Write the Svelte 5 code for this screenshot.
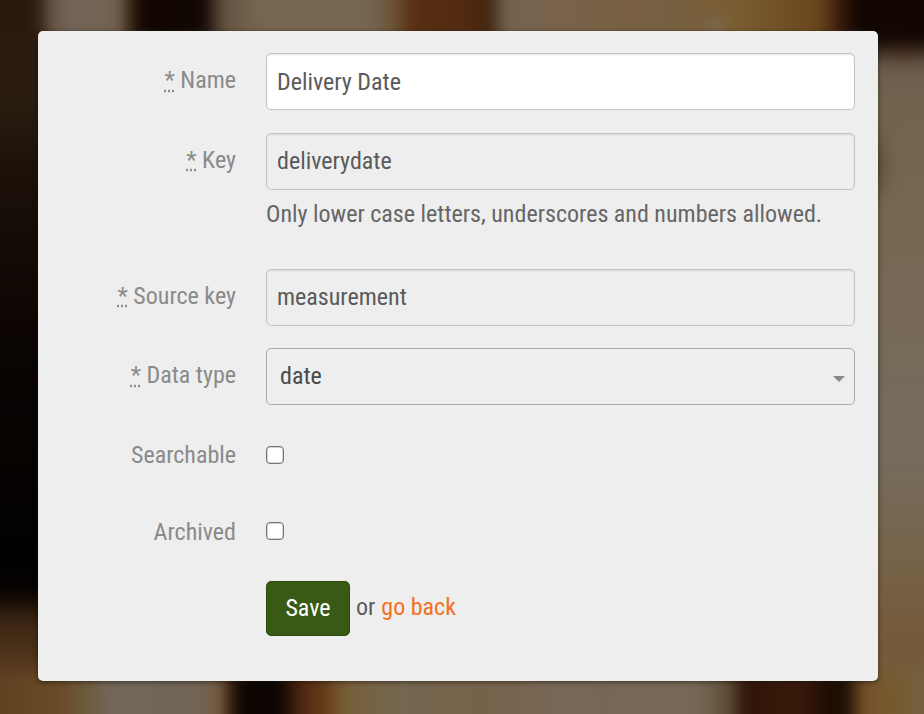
<script>
	// form rows, in page order
	const textFields = [
		{ label: "Name", value: "Delivery Date", editable: true },
		{ label: "Key", value: "deliverydate", hint: "Only lower case letters, underscores and numbers allowed." },
		{ label: "Source key", value: "measurement" },
	];
	const checks = ["Searchable", "Archived"];
</script>

<div class="page">
	<form class="card">
		{#each textFields as field}
			<div class="row" class:has-hint={field.hint}>
				<label class="label"><abbr>*</abbr> {field.label}</label>
				<div class="control">
					<input class="input" class:editable={field.editable} value={field.value} />
					{#if field.hint}<p class="hint">{field.hint}</p>{/if}
				</div>
			</div>
		{/each}

		<div class="row">
			<label class="label"><abbr>*</abbr> Data type</label>
			<div class="control">
				<div class="select">date<span class="caret"></span></div>
			</div>
		</div>

		{#each checks as check}
			<div class="row check-row">
				<label class="label">{check}</label>
				<div class="control"><span class="checkbox"></span></div>
			</div>
		{/each}

		<div class="row actions">
			<div class="label"></div>
			<div class="control">
				<button type="button" class="save">Save</button>
				<span class="or">or</span>
				<a href="#back" class="back">go back</a>
			</div>
		</div>
	</form>
</div>

<style>
	:global(body) {
		margin: 0;
		background: #000;
	}

	.page {
		position: relative;
		z-index: 0;
		width: 924px;
		height: 714px;
		overflow: hidden;
		display: flow-root;
		font-family: Roboto, "Liberation Sans", sans-serif;
		font-stretch: 75%;
		font-size: 24px;
		background: #7b6a50;
	}

	/* the blurred photo behind the card: only the strips round it show */
	.page::before {
		content: "";
		position: absolute;
		z-index: -1;
		inset: -20px;
		filter: blur(7px);
		background-repeat: no-repeat;
		background-image:
			radial-gradient(ellipse 16px 14px at 735px 48px, rgba(125, 120, 110, 0.7), transparent),
			radial-gradient(ellipse 10px 45px at 898px 185px, rgba(50, 22, 10, 0.5), transparent),
			radial-gradient(ellipse 18px 12px at 922px 75px, rgba(90, 45, 25, 0.6), transparent),
			linear-gradient(90deg, #2a1a0e 0, #2a1a0e 58px, #665444 70px, #74655a 90px, #70614e 140px, #2a1609 153px, #100602 165px, #120703 225px, #635240 242px, #766652 280px, #756651 390px, #6a4f32 418px, #582e12 430px, #512a10 490px, #3f2210 510px, #746350 525px, #78624a 580px, #796042 660px, #776042 690px, #7a5c30 760px, #6a461e 840px, #3a1a08 860px, #140703 875px, #100602 964px),
			linear-gradient(90deg, #5d3d1e 0, #6a4a27 80px, #6e5c40 110px, #71665a 130px, #716558 210px, #745a3f 242px, #2a1405 252px, #0b0401 265px, #0c0501 300px, #4e2710 320px, #663c18 345px, #776038 365px, #756650 420px, #76624a 500px, #776756 580px, #756854 720px, #5c4834 752px, #2f1508 762px, #3a1a0a 820px, #180a04 855px, #2a1408 870px, #74512a 882px, #765c30 920px, #74664e 964px),
			linear-gradient(180deg, #2a1c10 0, #2a1c10 120px, #1a1008 200px, #0a0402 370px, #020100 580px, #050201 610px, #3a2412 640px, #5e3f22 703px, #5d3d1e 754px),
			linear-gradient(180deg, #140803 0, #140803 60px, #6a5c4c 86px, #70634e 120px, #766650 220px, #756c5e 470px, #766650 540px, #745a38 670px, #74654e 754px);
		background-size:
			100% 100%,
			100% 100%,
			100% 100%,
			100% 60px,
			100% 62px,
			70px 100%,
			76px 100%;
		background-position:
			0 0,
			0 0,
			0 0,
			0 0,
			0 100%,
			0 0,
			100% 0;
	}

	.card {
		box-sizing: border-box;
		width: 840px;
		height: 650px;
		margin: 31px 0 0 38px;
		padding: 22px 23px 0 0;
		background: #eee;
		border-radius: 5px;
		box-shadow: 0 1px 5px rgba(0, 0, 0, 0.5);
	}

	.row {
		display: flex;
		margin-bottom: 22.7px;
	}
	.has-hint {
		margin-bottom: 36.9px;
	}
	.check-row {
		height: 54px;
	}

	.label {
		width: 198px;
		flex: none;
		margin-right: 30px;
		text-align: right;
		color: #8a8a8a;
		line-height: 55.7px;
	}
	.label abbr {
		text-decoration: underline dotted;
	}

	.control {
		flex: 1;
	}

	.input,
	.select {
		box-sizing: border-box;
		display: block;
		width: 100%;
		height: 57px;
		padding: 0 10px;
		border: 1px solid #c4c4c4;
		border-radius: 5px;
		background: #eee;
		color: #5a5a5a;
		font: inherit;
		font-stretch: 75%;
		box-shadow: inset 0 1px 2px rgba(0, 0, 0, 0.1);
	}
	.editable {
		background: #fff;
	}
	.select {
		position: relative;
		padding-left: 13px;
		line-height: 54px;
		border-color: #aaa;
		box-shadow: none;
		color: #4a4a4a;
	}
	.caret {
		position: absolute;
		right: 9px;
		top: 27px;
		border: 6px solid transparent;
		border-top-color: #888;
		border-bottom: 0;
	}

	.hint {
		margin: 7px 0 0;
		color: #666;
		line-height: 35px;
	}

	.checkbox {
		display: block;
		box-sizing: border-box;
		width: 18px;
		height: 18px;
		margin-top: 17.6px;
		background: #fff;
		border: 1px solid #767676;
		border-radius: 4px;
		box-shadow: inset 0 0 0 0.5px rgba(118, 118, 118, 0.6);
	}

	.actions .control {
		display: flex;
		align-items: center;
		height: 55px;
	}
	.save {
		width: 84px;
		height: 55px;
		padding: 0 0 2px;
		border: 1px solid #2c4a10;
		border-radius: 5px;
		background: #385a14;
		color: #fff;
		font: inherit;
		font-stretch: 75%;
		font-weight: 450;
	}
	.or,
	.back {
		margin-bottom: 3px;
	}
	.or {
		margin-left: 6px;
		margin-right: 6px;
		color: #5a5a5a;
	}
	.back {
		color: #f5701e;
		text-decoration: none;
	}
</style>
